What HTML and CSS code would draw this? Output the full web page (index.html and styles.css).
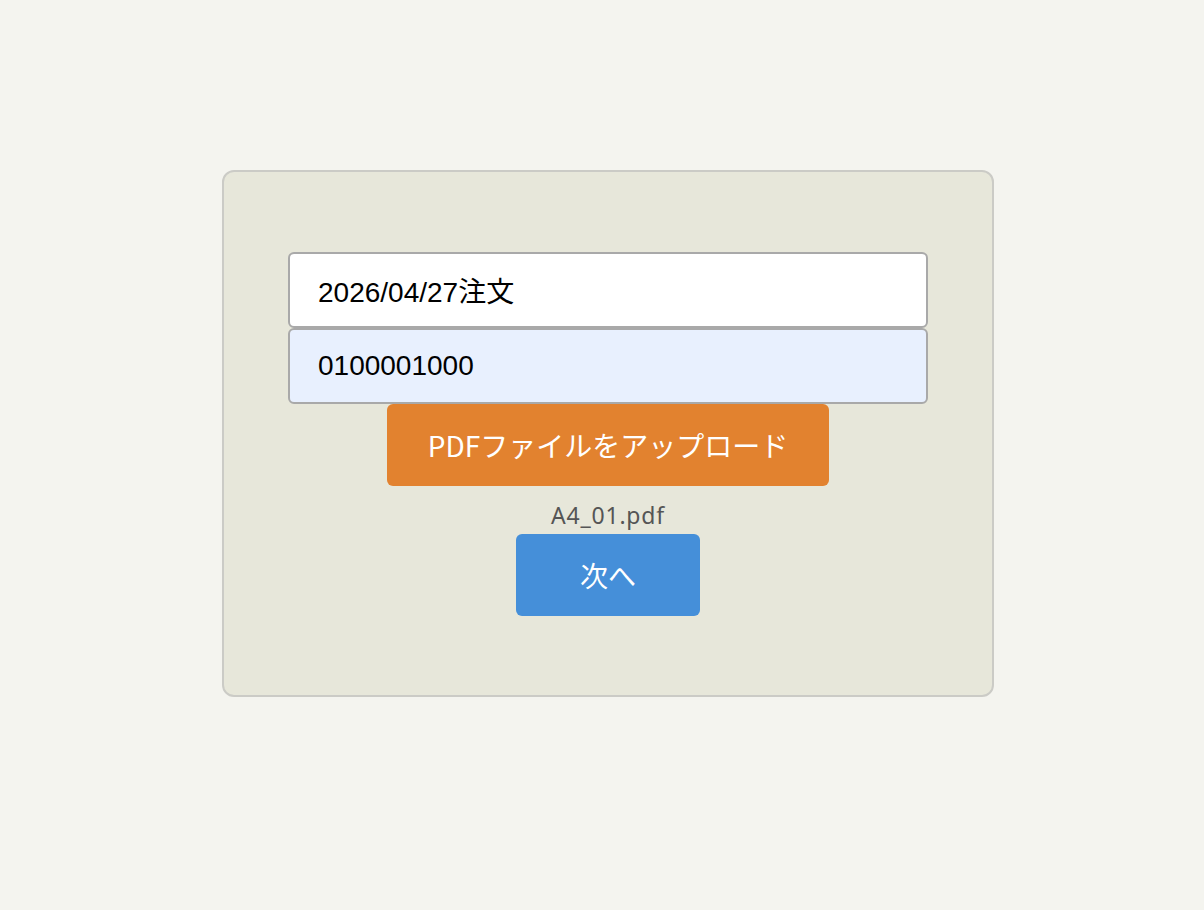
FILE: index.html
```html
<!DOCTYPE html>
<html lang="ja">
<head>
    <meta charset="UTF-8">
    <meta name="viewport" content="width=device-width, initial-scale=1.0">
    <title>PDFアップロード</title>
    <link rel="stylesheet" href="styles.css">
</head>
<body>
    <div class="card">
        <form class="upload-form">
            <input type="text" class="field" id="title" value="2026/04/27注文">
            <input type="text" class="field field-filled" id="code" value="0100001000">
            <button type="button" class="upload-button">PDFファイルをアップロード</button>
            <div class="file-name">A4_01.pdf</div>
            <button type="button" class="next-button">次へ</button>
        </form>
    </div>
</body>
</html>
```

FILE: styles.css
```css
body {
    margin: 0;
    min-height: 100vh;
    box-sizing: border-box;
    padding: 170px 0 0 12px;
    display: flex;
    flex-direction: column;
    align-items: center;
    background-color: #f4f4ef;
    font-family: "Liberation Sans", "Noto Sans CJK JP", sans-serif;
}

.card {
    width: 772px;
    box-sizing: border-box;
    padding: 80px 64px 79px;
    background-color: #e7e7da;
    border: 2px solid #cbcbc6;
    border-radius: 12px;
}

.upload-form {
    display: flex;
    flex-direction: column;
    align-items: center;
}

.field {
    width: 640px;
    height: 76px;
    box-sizing: border-box;
    padding: 0 28px;
    font-family: "Liberation Sans", "Noto Sans CJK JP", sans-serif;
    font-size: 28px;
    color: #000;
    background-color: #fff;
    border: 2px solid #a9a9a9;
    border-radius: 6px;
    outline: none;
}

.field-filled {
    background-color: #e8f0fe;
}

.upload-button,
.next-button {
    height: 82px;
    padding: 0;
    font-family: "Noto Sans CJK JP", sans-serif;
    font-size: 28px;
    color: #fff;
    border: none;
    border-radius: 6px;
    cursor: pointer;
}

.upload-button {
    width: 442px;
    background-color: #e2822f;
}

.next-button {
    width: 184px;
    background-color: #458fd9;
}

.file-name {
    height: 48px;
    line-height: 58px;
    font-family: "Noto Sans", "Noto Sans CJK JP", sans-serif;
    font-size: 23px;
    letter-spacing: 0.8px;
    color: #555;
}
```
